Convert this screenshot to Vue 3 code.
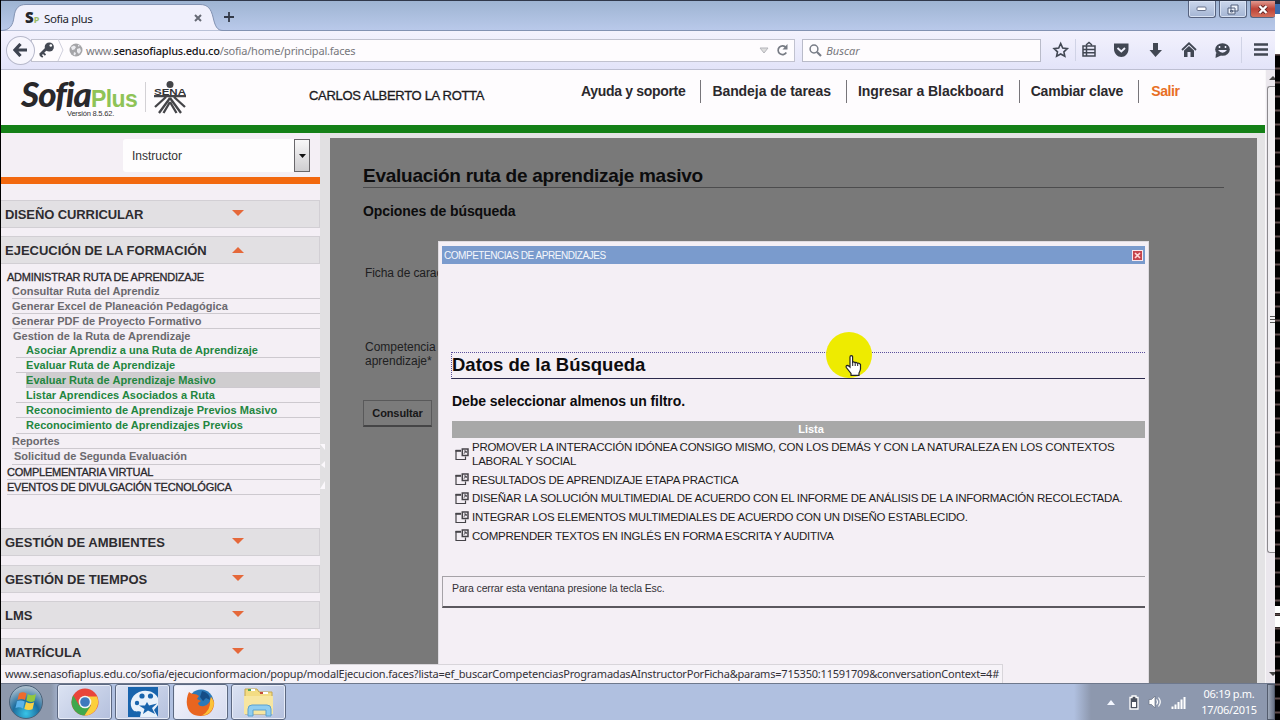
<script setup>
import { ref } from "vue";

const navLinks = ["Ayuda y soporte", "Bandeja de tareas", "Ingresar a Blackboard", "Cambiar clave", "Salir"];

const openMenu = [
  { label: "ADMINISTRAR RUTA DE APRENDIZAJE", type: "group" },
  { label: "Consultar Ruta del Aprendiz", type: "item" },
  { label: "Generar Excel de Planeación Pedagógica", type: "item" },
  { label: "Generar PDF de Proyecto Formativo", type: "item" },
  { label: "Gestion de la Ruta de Aprendizaje", type: "item parent" },
  { label: "Asociar Aprendiz a una Ruta de Aprendizaje", type: "sub" },
  { label: "Evaluar Ruta de Aprendizaje", type: "sub" },
  { label: "Evaluar Ruta de Aprendizaje Masivo", type: "sub current" },
  { label: "Listar Aprendices Asociados a Ruta", type: "sub" },
  { label: "Reconocimiento de Aprendizaje Previos Masivo", type: "sub" },
  { label: "Reconocimiento de Aprendizajes Previos", type: "sub last" },
  { label: "Reportes", type: "item" },
  { label: "Solicitud de Segunda Evaluación", type: "item last" },
  { label: "COMPLEMENTARIA VIRTUAL", type: "group lined" },
  { label: "EVENTOS DE DIVULGACIÓN TECNOLÓGICA", type: "group lined" },
];

const bottomMenus = ["GESTIÓN DE AMBIENTES", "GESTIÓN DE TIEMPOS", "LMS", "MATRÍCULA"];

const competencias = [
  "PROMOVER LA INTERACCIÓN IDÓNEA CONSIGO MISMO, CON LOS DEMÁS Y CON LA NATURALEZA EN LOS CONTEXTOS LABORAL Y SOCIAL",
  "RESULTADOS DE APRENDIZAJE ETAPA PRACTICA",
  "DISEÑAR LA SOLUCIÓN MULTIMEDIAL DE ACUERDO CON EL INFORME DE ANÁLISIS DE LA INFORMACIÓN RECOLECTADA.",
  "INTEGRAR LOS ELEMENTOS MULTIMEDIALES DE ACUERDO CON UN DISEÑO ESTABLECIDO.",
  "COMPRENDER TEXTOS EN INGLÉS EN FORMA ESCRITA Y AUDITIVA",
];

const showModal = ref(true);
</script>

<template>
  <div class="screen">
    <div class="window">
      <div class="titlebar">
        <svg class="tab-shape" width="222" height="31" viewBox="0 0 222 31">
          <path d="M0 30.500C9 30.500 12 25 13 17C14 8 18 4.500 25 4.500H199C207 4.500 210 9 212 17C214 26 216 30.500 222 30.500V31H0Z" fill="#f0f0fc" stroke="#8292b2" />
        </svg>
        <div class="tab">
          <span class="fav"><b>S</b><i>P</i></span>
          <span class="tab-name">Sofia plus</span>
          <svg width="8" height="8" viewBox="0 0 8 8"><path d="M1 1L7 7M7 1L1 7" stroke="#666a75" stroke-width="2" /></svg>
        </div>
        <svg class="new-tab" width="10" height="10" viewBox="0 0 10 10"><path d="M5 0V10M0 5H10" stroke="#333a48" stroke-width="1.800" /></svg>
        <div class="win-buttons">
          <span class="win-btn"><svg width="12" height="6"><rect x="1" y="1" width="9" height="3.500" rx="1" fill="#fff" stroke="#66718b" /></svg></span>
          <span class="win-btn"><svg width="12" height="11"><path d="M4 1H11V7H4ZM1 4H8V10H1ZM3.500 6.500H5.500V8H3.500Z" fill="#eef2fa" stroke="#53607c" /></svg></span>
          <span class="win-btn close"><svg width="10" height="9"><path d="M1.500 1L8.500 8M8.500 1L1.500 8" stroke="#5d2424" stroke-width="4" /><path d="M1.500 1L8.500 8M8.500 1L1.500 8" stroke="#fff" stroke-width="2.400" /></svg></span>
        </div>
      </div>

      <div class="toolbar">
        <span class="back"><svg width="15" height="14" viewBox="0 0 15 14"><path d="M7.500 1L2 7L7.500 13M2.500 7H14" fill="none" stroke="#3d4350" stroke-width="3.200" /></svg></span>
        <div class="address">
          <svg class="key" width="17" height="16" viewBox="0 0 17 16"><circle cx="11.300" cy="5" r="4.600" fill="#444953" /><circle cx="12.800" cy="3.500" r="1.300" fill="#fff" /><path d="M8.500 6.500L2 13" stroke="#444953" stroke-width="2.800" /><path d="M2 13L4.800 15M4.500 10.500L7.500 13" stroke="#444953" stroke-width="1.800" /></svg>
          <svg class="chevron" width="7" height="22" viewBox="0 0 7 22"><path d="M1 0L6 11L1 22" fill="none" stroke="#cfcfdc" /></svg>
          <svg class="globe" width="14" height="14" viewBox="0 0 14 14"><circle cx="7" cy="7" r="6.500" fill="#a5a5a8" /><path d="M2 4L5 2.500L7 4L5.500 6.500L3 7ZM8 6L11 5L12 8L10 11L8 9ZM5 9L7 10L6 12.500L4.500 11.500ZM9 1.500L11 3L9 3.500Z" fill="#ececf0" /></svg>
          <span class="url">www.<b>senasofiaplus.edu.co</b>/sofia/home/principal.faces</span>
          <svg width="10" height="7" viewBox="0 0 10 7"><path d="M1 1H9L5 6Z" fill="#ddd" stroke="#b5b5bb" /></svg>
          <svg class="reload" width="13" height="12" viewBox="0 0 13 12"><path d="M10 3.500A4.400 4.400 0 1 0 10.300 8.500" fill="none" stroke="#777b84" stroke-width="1.700" /><path d="M11.500 0V5.500H6.500Z" fill="#777b84" /></svg>
        </div>
        <div class="search">
          <svg width="13" height="13" viewBox="0 0 13 13"><circle cx="5" cy="5" r="3.900" fill="none" stroke="#777c86" stroke-width="1.500" /><path d="M8 8L12 12" stroke="#777c86" stroke-width="2.200" /></svg>
          <i>Buscar</i>
        </div>
        <svg class="tools" width="230" height="28" viewBox="1045 36 230 28" fill="none" stroke="#414753">
          <path d="M1060.700 43.500L1062.700 48L1067.300 48.600L1063.900 51.800L1064.800 56.300L1060.700 54L1056.600 56.300L1057.500 51.800L1054.100 48.600L1058.700 48Z" stroke-width="1.600" />
          <path d="M1075.500 39V61M1241.500 37V63" stroke="#d0d3e6" />
          <path d="M1083 46H1095V56H1083ZM1083 49.500H1095M1083 52.700H1095M1086.500 46V56M1086 45L1089 42.500L1092 45" stroke-width="1.500" />
          <path d="M1114 43.500H1128.500V49C1128.500 53.500 1125 57 1121.300 57S1114 53.500 1114 49Z" fill="#414753" stroke="none" />
          <path d="M1117.500 48L1121.300 51.500L1125 48" stroke="#f0f1fd" stroke-width="1.900" />
          <path d="M1153 43H1158V50H1162L1155.500 57L1149.500 50H1153Z" fill="#414753" stroke="none" />
          <path d="M1182 50L1189 43.300L1196 50" stroke-width="1.800" />
          <path d="M1184 50.500L1189 46L1194 50.500V57H1190.500V52H1187.500V57H1184Z" fill="#414753" stroke="none" />
          <ellipse cx="1222.500" cy="49.500" rx="7.300" ry="6.300" fill="#414753" stroke="none" />
          <path d="M1216 53L1215.500 58L1221 55.500Z" fill="#414753" stroke="none" />
          <path d="M1218 50Q1222.500 55.500 1227 50Z" fill="#eef" stroke="none" />
          <path d="M1219.500 46V48M1225.500 46V48" stroke="#eef" stroke-width="1.500" />
          <path d="M1254 44.500H1268M1254 49.500H1268M1254 54.500H1268" stroke-width="2.600" />
        </svg>
      </div>

      <div class="viewport">
        <div class="page">
          <header class="site-header">
            <div class="brand">
              <div class="logo"><span class="sofia">Sofia</span><span class="plus">Plus</span></div>
              <small>Versión 8.5.62.</small>
            </div>
            <div class="sena">
              <svg width="34" height="34" viewBox="0 0 34 34">
                <circle cx="17" cy="3.500" r="3.500" fill="#444448" />
                <text x="1" y="13.500" textLength="32" lengthAdjust="spacingAndGlyphs" class="sena-text">SENA</text>
                <path d="M1 15.200H33M13 16L2 26M21 16L32 26M17 17L6 32M17 17L28 32M17 21L10.500 32M17 21L23.500 32" fill="none" stroke="#444448" stroke-width="2.300" />
              </svg>
            </div>
            <div class="user">CARLOS ALBERTO LA ROTTA</div>
            <nav>
              <a v-for="link in navLinks" :key="link" :class="{ exit: link === 'Salir' }">{{ link }}</a>
            </nav>
          </header>

          <div class="columns">
            <aside>
              <div class="role-row">
                <div class="role">
                  <span>Instructor</span>
                  <span class="role-arrow"><svg width="7" height="4"><path d="M0 0H7L3.500 4Z" fill="#111" /></svg></span>
                </div>
              </div>
              <div class="menu-head first">DISEÑO CURRICULAR<i class="arrow"></i></div>
              <div class="menu-head second">EJECUCIÓN DE LA FORMACIÓN<i class="arrow up"></i></div>
              <ul class="menu">
                <li v-for="entry in openMenu" :key="entry.label" :class="entry.type"><span>{{ entry.label }}</span></li>
              </ul>
              <div class="bottom-menus">
                <div v-for="name in bottomMenus" :key="name" class="menu-head">{{ name }}<i class="arrow"></i></div>
              </div>
            </aside>
            <div class="splitter">
              <svg width="8" height="50" viewBox="0 0 8 50"><path d="M0 1H5V7ZM5 18V25L1 22ZM5 38V46H0Z" fill="#fbf8fc" /></svg>
            </div>
            <main>
              <h1>Evaluación ruta de aprendizaje masivo</h1>
              <h2>Opciones de búsqueda</h2>
              <p class="ficha">Ficha de carac</p>
              <p class="competencia">Competencia<br>aprendizaje*</p>
              <button>Consultar</button>
            </main>
          </div>
        </div>
        <div class="scrollbar">
          <svg width="7" height="5" class="sb-up"><path d="M1 4L5 0L7 2V4Z" fill="#444" /></svg>
          <div class="thumb"><span></span></div>
          <svg width="7" height="5" class="sb-down"><path d="M1 0H7V2L5 4Z" fill="#444" /></svg>
        </div>
      </div>

      <div class="taskbar">
        <div class="start">
          <svg width="36" height="36" viewBox="0 0 36 36">
            <defs>
              <radialGradient id="orb" cx=".5" cy=".85" r=".8"><stop offset="0" stop-color="#38c5e8" /><stop offset=".5" stop-color="#1d6d9e" /><stop offset="1" stop-color="#a9bccb" /></radialGradient>
            </defs>
            <circle cx="18" cy="18" r="16.500" fill="url(#orb)" stroke="#4b6279" />
            <path d="M11 9.500Q15 7 18.500 9.500L17 16Q13.500 14 9.500 16Z" fill="#ee6b2d" />
            <path d="M19.800 10Q23.500 12.500 28 10L26.500 17Q22.500 19 18.300 16.500Z" fill="#93c83e" />
            <path d="M9 17.300Q13 15.500 16.700 17.500L15 24.500Q11.500 22.500 7.500 24Z" fill="#5bb3ea" />
            <path d="M18 18Q22 20.300 26.200 18.300L24.500 25.300Q20.500 27 16.300 25Z" fill="#fbd244" />
          </svg>
        </div>
        <div class="task">
          <svg width="28" height="28" viewBox="0 0 28 28">
            <circle cx="14" cy="14" r="13.500" fill="#e9453a" />
            <path d="M2.300 7.300A13.500 13.500 0 0 0 13.500 27.500L20 17.500H8.200Z" fill="#40a84c" />
            <path d="M13.500 27.500A13.500 13.500 0 0 0 26 8.500H14L20 17.500Z" fill="#fbcf3b" />
            <circle cx="14" cy="14" r="6.300" fill="#f3f5f5" /><circle cx="14" cy="14" r="4.800" fill="#3e79bd" />
          </svg>
        </div>
        <div class="task">
          <svg width="30" height="30" viewBox="0 0 30 30">
            <rect width="30" height="30" fill="#1864ad" />
            <path d="M30 11C27 5 19 2 11 5C2 9 1 18 5 23C8 26 11 23 13 25L12 30H30L26 23L30 18Z" fill="#e8f1fb" />
            <circle cx="14" cy="9" r="2.600" fill="#1864ad" /><circle cx="22.500" cy="9" r="2.600" fill="#1864ad" /><circle cx="9" cy="16" r="2.200" fill="#1864ad" />
            <path d="M19 15L21 18.500L29 16.500L24 21L27 27L20 23.500L15 27L16.500 22L11 18.500L17 18.500Z" fill="#1864ad" />
          </svg>
        </div>
        <div class="task bright">
          <svg width="29" height="29" viewBox="0 0 29 29">
            <circle cx="15" cy="14" r="12.500" fill="#2b79b9" />
            <path d="M16 3Q24 5 24 12L20 10L17 13L14 9Z" fill="#154d87" />
            <path d="M3 4Q5 6 8 6Q11 6 13 8L11 11L15 13L12 15Q13 19 18 18Q24 17 25 9Q29 13 28 17Q26 28 14.500 28Q3 28 1 17Q0 10 3 4Z" fill="#e96520" />
            <path d="M25 9Q29 14 27.500 18Q25 27 16 27.500Q25 22 24 13Z" fill="#fbc33a" />
          </svg>
        </div>
        <div class="task">
          <svg width="33" height="30" viewBox="0 0 33 30">
            <path d="M3 2H15L17 5H30V27H3Z" fill="#f3dc83" stroke="#c6a64c" />
            <path d="M7 3H13M19 6H26" stroke="#fff" stroke-width="2" /><path d="M6 3H9" stroke="#4fa657" stroke-width="2" /><path d="M18 6H21" stroke="#c54b38" stroke-width="2" />
            <path d="M2 9H31V27H2Z" fill="#f7e6a1" />
            <path d="M6 29V22Q6 18 10 18H25Q29 18 29 22V29H24V23H11V29Z" fill="#8fcdf0" stroke="#5ba1d0" />
          </svg>
        </div>
        <div class="tray">
          <svg width="8" height="5"><path d="M0 5L4 0L8 5Z" fill="#f4f7ff" /></svg>
          <svg width="10" height="15" viewBox="0 0 10 15"><path d="M3 1H7V2.500H9V14H1V2.500H3Z" fill="#4b515e" stroke="#fff" stroke-width="1.300" /><path d="M3 7H7V12H3Z" fill="#fff" /></svg>
          <svg width="14" height="14" viewBox="0 0 14 14"><path d="M1 4.500H3.500L7 1V13L3.500 9.500H1Z" fill="#fff" stroke="#687081" stroke-width=".7" /><path d="M8.500 4.500Q10.500 7 8.500 9.500M10.500 2.500Q14 7 10.500 11.500" fill="none" stroke="#fff" stroke-width="1.200" /></svg>
          <svg width="15" height="13" viewBox="0 0 15 13"><path d="M1.500 13V10.500M4.500 13V8.500M7.500 13V6M10.500 13V3.500M13.500 13V1" stroke="#fff" stroke-width="2" /></svg>
          <div class="clock"><span>06:19 p.m.</span><span>17/06/2015</span></div>
        </div>
        <div class="show-desktop"></div>
      </div>

      <div v-if="showModal" class="modal">
        <div class="modal-bar">
          <span>COMPETENCIAS DE APRENDIZAJES</span>
          <button class="modal-close" @click="showModal = false"><svg width="7" height="7"><path d="M1 1L6 6M6 1L1 6" stroke="#ffd8d8" stroke-width="1.600" /></svg></button>
        </div>
        <div class="modal-body">
          <h2>Datos de la Búsqueda</h2>
          <p class="hint">Debe seleccionar almenos un filtro.</p>
          <div class="list-head">Lista</div>
          <ul class="competencias">
            <li v-for="text in competencias" :key="text">
              <svg width="14" height="13" viewBox="0 0 14 13" fill="none" stroke="#454348"><path d="M6 2.500H1V11.500H10.500V8.500" stroke-width="1.200" /><path d="M0.500 2.800H6" stroke-width="2" /><path d="M7.300 1H13V7.500H7.300Z" stroke-width="1.500" /><path d="M9 5.700L11 3M9 3H11.200V5" stroke-width="1" /></svg>
              <span>{{ text }}</span>
            </li>
          </ul>
        </div>
        <div class="modal-foot">Para cerrar esta ventana presione la tecla Esc.</div>
      </div>

      <div class="statusbar">www.senasofiaplus.edu.co/sofia/ejecucionformacion/popup/modalEjecucion.faces?lista=ef_buscarCompetenciasProgramadasAInstructorPorFicha&amp;params=715350:11591709&amp;conversationContext=4#</div>

      <div class="pointer">
        <svg width="17" height="21" viewBox="0 0 17 21"><path d="M5 12V2Q5 .7 6.300 .7T7.600 2V7.200Q8.500 6.300 10 7.500Q11.200 6.800 12.500 8.300Q14 7.700 15.500 9.500V14Q15 16.500 14 18V20.300H6V18.500L1.300 12.500Q.5 10.500 2.500 10.300Q3.500 10.500 5 12Z" fill="#fff" stroke="#222" stroke-width="1.200" /><path d="M7.700 7V11M10.200 8V11M12.700 8.500V11" stroke="#222" /></svg>
      </div>
    </div>
    <div class="edge"></div>
  </div>
</template>

<style>
body {
  background: #000;
}
</style>

<style scoped>
.screen {
  display: flex;
  width: 1280px;
  height: 720px;
  overflow: hidden;
  background: #000;
  font-family: "Liberation Sans", sans-serif;
}

.screen * {
  box-sizing: border-box;
}

svg {
  display: block;
  flex: none;
}

h1, h2, p, ul {
  margin: 0;
  padding: 0;
  list-style: none;
}

.window {
  position: relative;
  width: 1274px;
  height: 720px;
  margin-left: 1px;
  overflow: hidden;
}

.edge {
  flex: 1;
  background:
    linear-gradient(#222a3d 0 4px, #3d6dae 4px 14px, #fff 14px 54px, transparent 54px 606px, #fff 606px 613px, transparent 613px 616px, #fff 616px 627px, transparent 627px),
    repeating-linear-gradient(#000 0 11px, #5e4c4c 12px 13px, #000 14px);
}

/* browser chrome */
.titlebar {
  display: flex;
  position: relative;
  height: 31px;
  border-top: 1px solid #30384a;
  border-bottom: 1px solid #8292b2;
  background: linear-gradient(#9eb4d2, #b9c9ea);
}

.tab-shape {
  position: absolute;
  top: -1px;
  left: 0;
}

.tab {
  display: flex;
  position: relative;
  align-items: center;
  width: 201px;
  height: 34px;
  padding-left: 24px;
  font: 12px "Noto Sans", sans-serif;
  color: #24262c;
}

.fav {
  width: 19px;
  font-size: 15px;
  line-height: 15px;
  white-space: nowrap;
}

.fav b {
  font-weight: 900;
}

.fav i {
  font-size: 9px;
  font-style: normal;
  font-weight: bold;
  color: #9bbd68;
}

.tab-name {
  flex: 1;
  font-size: 11.5px;
  letter-spacing: -0.4px;
}

.new-tab {
  position: relative;
  margin: 11px 0 0 22px;
}

.win-buttons {
  display: flex;
  gap: 3px;
  margin-left: auto;
}

.win-btn {
  display: flex;
  align-items: center;
  justify-content: center;
  width: 28px;
  height: 17px;
  border: 1px solid #56627e;
  border-top: 0;
  border-radius: 0 0 3px 3px;
  background: linear-gradient(#cbd7ec, #a4b5d4);
  box-shadow: inset 0 0 0 1px #d8e2f3;
}

.win-btn.close {
  width: 25px;
  border-right: 0;
  background: linear-gradient(#e29a90, #bd4337 50%, #d4705c);
  box-shadow: none;
}

.toolbar {
  display: flex;
  align-items: center;
  height: 39px;
  padding-left: 5px;
  border-bottom: 1px solid #bdbfd2;
  background: linear-gradient(#f3f2fd, #e3e4f9);
}

.back {
  display: flex;
  align-items: center;
  justify-content: center;
  width: 29px;
  height: 29px;
  border: 1px solid #b7b9cb;
  border-radius: 50%;
  background: #f7f6fd;
  z-index: 1;
}

.address {
  display: flex;
  align-items: center;
  width: 765px;
  height: 23px;
  margin-left: -4px;
  padding: 0 5px 0 6px;
  border: 1px solid #c1c2cf;
  background: #fefcfe;
}

.chevron {
  margin-left: 2px;
}

.globe {
  margin-left: 5px;
}

.url {
  flex: 1;
  margin-left: 3px;
  font: 11px "Noto Sans", sans-serif;
  letter-spacing: -0.21px;
  color: #77777c;
}

.url b {
  font-weight: 500;
  color: #161618;
}

.reload {
  margin-left: 7px;
}

.search {
  display: flex;
  align-items: center;
  width: 239px;
  height: 23px;
  margin: 0 4px 0 7px;
  padding-left: 6px;
  border: 1px solid #b9bbc9;
  background: #fefcfe;
}

.search i {
  margin-left: 4px;
  font: italic 11px "Noto Sans", sans-serif;
  color: #77777c;
}

/* page */
.viewport {
  display: flex;
  height: 613px;
}

.page {
  width: 1264px;
  background: #e4e3e5;
}

.site-header {
  display: flex;
  height: 63px;
  border-bottom: 8px solid #148017;
  background: #fefcfe;
}

.brand {
  width: 124px;
  padding: 5px 0 0 20px;
}

.logo {
  display: flex;
  align-items: baseline;
  height: 35px;
  white-space: nowrap;
}

.sofia {
  font: italic 900 35px/36px Lato, sans-serif;
  letter-spacing: -1px;
  color: #29282b;
}

.plus {
  font-size: 23px;
  font-weight: bold;
  line-height: 24px;
  letter-spacing: -0.6px;
  color: #8fc357;
}

.brand small {
  display: block;
  padding-left: 46px;
  font-size: 7.5px;
  line-height: 8px;
  letter-spacing: -0.2px;
  color: #333;
  white-space: nowrap;
}

.sena {
  width: 184px;
  height: 30px;
  margin: 12px 0 0 20px;
  padding-left: 7px;
  border-left: 1px solid #d3d1d5;
}

.sena svg {
  margin-top: -1px;
}

.sena-text {
  font-size: 8.5px;
  font-weight: bold;
  fill: #333336;
}

.user {
  width: 251px;
  margin-left: -20px;
  padding-top: 18px;
  font-size: 13px;
  line-height: 16px;
  letter-spacing: -0.3px;
  color: #1b1a1d;
  -webkit-text-stroke: 0.3px #1b1a1d;
}

nav {
  display: flex;
  height: 23px;
  margin-top: 10px;
  margin-left: 9px;
}

nav a {
  padding: 0 15px 0 11px;
  border-right: 1px solid #77757a;
  font-size: 14px;
  font-weight: bold;
  line-height: 23px;
  letter-spacing: -0.07px;
  color: #2b292d;
}

nav a:first-child {
  padding-left: 12px;
  letter-spacing: -0.32px;
}

nav a:nth-child(4) {
  letter-spacing: -0.18px;
}

nav .exit {
  border: 0;
  padding-left: 12px;
  letter-spacing: -0.4px;
  color: #e86f24;
}

.columns {
  display: flex;
  height: 550px;
}

aside {
  width: 319px;
  background: #f4eff5;
}

.role-row {
  display: flex;
  justify-content: flex-end;
  height: 51px;
  padding: 6px 10px 0 0;
  border-bottom: 7px solid #f2680f;
}

.role {
  display: flex;
  align-items: center;
  justify-content: space-between;
  width: 187px;
  height: 33px;
  padding-left: 9px;
  border-radius: 3px;
  background: #fefdfe;
  font-size: 12px;
  color: #333;
}

.role-arrow {
  display: flex;
  align-items: center;
  justify-content: center;
  width: 16px;
  height: 33px;
  border: 1px solid #69676b;
  background: linear-gradient(#f8f7f8, #cfced1);
}

.menu-head {
  display: flex;
  position: relative;
  align-items: center;
  height: 28px;
  padding: 1px 0 0 4px;
  border: 1px solid #d2cfd4;
  border-left: 0;
  background: #e2e0e3;
  font-size: 13px;
  font-weight: bold;
  color: #2e2c30;
}

.menu-head.first {
  margin-top: 16px;
  letter-spacing: -0.1px;
}

.menu-head.second {
  margin-top: 8px;
}

.arrow {
  position: absolute;
  top: 9px;
  left: 231px;
  border: 6px solid transparent;
  border-top-color: #e5683a;
  border-bottom: 0;
}

.arrow.up {
  top: 10px;
  border-top: 0;
  border-bottom: 6px solid #e5683a;
}

.menu {
  height: 264px;
  padding-top: 6px;
}

.menu li {
  height: 15px;
  margin-left: 11px;
  border-bottom: 1px solid #cdc9cf;
  font-size: 11px;
  font-weight: bold;
  line-height: 14px;
  white-space: nowrap;
  color: #6b696e;
}

.menu .group {
  height: 14px;
  margin-left: 6px;
  border: 0;
  font-weight: normal;
  letter-spacing: -0.23px;
  color: #29272b;
  -webkit-text-stroke: 0.3px #29272b;
}

.menu .group.lined {
  height: 15px;
  border-bottom: 1px solid #cdc9cf;
}

.menu .parent {
  height: 14px;
  padding-left: 1px;
  border: 0;
}

.menu .sub {
  margin-left: 15px;
  padding-left: 10px;
  letter-spacing: 0.04px;
  color: #23863f;
}

.menu .last {
  height: 16px;
}

.menu .item.last {
  padding-left: 2px;
}

.menu .current {
  margin-left: 25px;
  padding-left: 0;
  background: #cfcdcf;
}

.bottom-menus {
  display: flex;
  flex-direction: column;
  gap: 8.500px;
}

.splitter {
  width: 10px;
  padding-top: 310px;
  background: #e1e0e2;
}

main {
  width: 927px;
  height: 545px;
  margin-top: 5px;
  padding: 25px 33px 0;
  background: #797979;
  color: #0c0c0d;
}

main h1 {
  height: 25px;
  border-bottom: 1px solid #4c4c4d;
  font-size: 19px;
  line-height: 25px;
  letter-spacing: -0.26px;
}

main h2 {
  margin-top: 15px;
  font-size: 14px;
  line-height: 16px;
  letter-spacing: -0.08px;
}

main p {
  padding-left: 2px;
  font-size: 12px;
  line-height: 14px;
  color: #202021;
}

.ficha {
  margin-top: 47px !important;
  letter-spacing: -0.1px;
  white-space: nowrap;
}

.competencia {
  margin-top: 60px !important;
}

main button {
  width: 69px;
  height: 27px;
  margin-top: 32px;
  padding: 0;
  border: 1px solid #59595a;
  border-bottom: 2px solid #454546;
  background: #7b7b7b;
  font: bold 11px "Liberation Sans", sans-serif;
  letter-spacing: -0.1px;
  color: #171718;
}

.scrollbar {
  display: flex;
  flex-direction: column;
  width: 10px;
  border-left: 1px solid #f8f7f8;
  background: #ebe7ed;
}

.sb-up {
  margin: 6px 0 0 2px;
}

.thumb {
  display: flex;
  align-items: center;
  height: 467px;
  margin: 5px 0 0 1px;
  padding-left: 2px;
  border: 1px solid #8c8a8e;
  border-right: 0;
  border-radius: 3px 0 0 3px;
  background: #f1eff2;
}

.thumb span {
  width: 6px;
  height: 7px;
  background: repeating-linear-gradient(#555 0 1px, #f1eff2 1px 3px);
}

.sb-down {
  margin: auto 0 6px 2px;
}

/* taskbar */
.taskbar {
  display: flex;
  height: 37px;
  border-top: 1px solid #6e788c;
  background: linear-gradient(90deg, #8e99ad 0 50px, #b0c0e0 62px 1073px, #8d98ae 1090px);
}

.start {
  width: 56px;
  padding-left: 7px;
}

.task {
  display: flex;
  align-items: center;
  justify-content: center;
  width: 55px;
  height: 36px;
  margin-right: 3px;
  border: 1px solid #5c6881;
  border-radius: 3px;
  background: linear-gradient(135deg, #dce3f3, #b4c0dd);
  box-shadow: inset 0 0 0 1px #e7ecf8;
}

.task.bright {
  background: linear-gradient(135deg, #f5f5fd, #d6dbef);
}

.tray {
  display: flex;
  align-items: center;
  gap: 9px;
  margin-left: auto;
}

.tray svg:first-child {
  margin-right: 5px;
}

.clock {
  display: flex;
  flex-direction: column;
  align-items: center;
  width: 56px;
  margin-left: 6px;
  font: 11px/16px "Noto Sans", sans-serif;
  letter-spacing: -0.3px;
  color: #fff;
  white-space: nowrap;
}

.show-desktop {
  width: 8px;
  margin-left: 10px;
  border: 1px solid #535c6d;
  background: linear-gradient(90deg, #9fa9ba, #697386);
}

/* search popup */
.modal {
  position: absolute;
  top: 241px;
  left: 437px;
  width: 711px;
  height: 442px;
  padding: 4px 3px 0;
  border: 1px solid #dedbe0;
  border-bottom: 0;
  background: #f4eff5;
}

.modal-bar {
  display: flex;
  align-items: center;
  justify-content: space-between;
  height: 18px;
  padding: 0 2px;
  background: #7a9bcd;
  font-size: 10px;
  letter-spacing: -0.46px;
  color: #f5f7fc;
}

.modal-close {
  display: flex;
  align-items: center;
  justify-content: center;
  width: 11px;
  height: 11px;
  padding: 0;
  border: 1px solid #fbe8ec;
  background: #c5454d;
}

.modal-body {
  height: 312px;
  padding: 88px 0 0 9px;
}

.modal-body h2 {
  height: 27px;
  border: 1px dotted #5a4f9c;
  border-bottom: 1px solid #2c2a4c;
  border-right: 0;
  font-size: 18.5px;
  line-height: 24px;
  color: #0d0c0e;
}

.hint {
  margin: 13px 0 0 1px;
  font-size: 14px;
  font-weight: bold;
  line-height: 18px;
  letter-spacing: -0.08px;
  color: #0d0c0e;
}

.list-head {
  height: 17px;
  margin: 11px 0 0 1px;
  padding-left: 25px;
  background: #a8a8a8;
  font-size: 11px;
  font-weight: bold;
  line-height: 17px;
  text-align: center;
  color: #fff;
}

.competencias {
  padding: 2px 0 0 4px;
}

.competencias li {
  display: flex;
  align-items: center;
  margin-bottom: 4.700px;
  font-size: 11.5px;
  line-height: 14px;
  letter-spacing: -0.27px;
  color: #1f1d21;
}

.competencias span {
  width: 665px;
  margin-left: 3px;
}

.modal-foot {
  height: 32px;
  padding-left: 9px;
  border: 1px solid #a5a2a7;
  border-right: 0;
  border-bottom: 2px solid #5b585e;
  font-size: 10.5px;
  line-height: 23px;
  letter-spacing: -0.12px;
  color: #333136;
}

.statusbar {
  position: absolute;
  top: 664px;
  left: 0;
  width: 1002px;
  height: 19px;
  padding-left: 4px;
  border: 1px solid #d8d5da;
  border-left: 0;
  border-bottom: 0;
  background: #f6f3f8;
  font: 11px/18px "Noto Sans", sans-serif;
  letter-spacing: -0.21px;
  white-space: nowrap;
  color: #333137;
}

.pointer {
  position: absolute;
  top: 332px;
  left: 825px;
  width: 46px;
  height: 46px;
  padding: 23px 0 0 19px;
  border-radius: 50%;
  background: #eeeb00;
}
</style>
